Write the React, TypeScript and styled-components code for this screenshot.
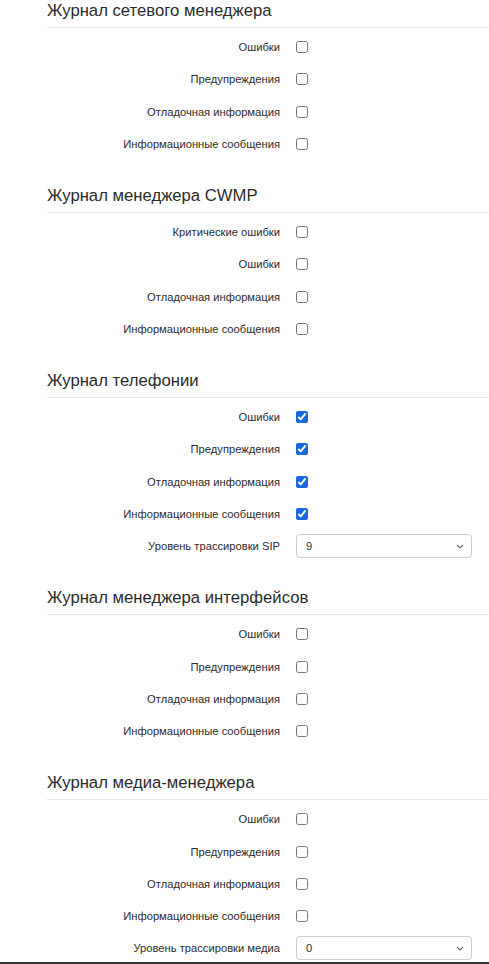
import React from "react";
import styled, { createGlobalStyle } from "styled-components";

type Field =
  | { kind: "check"; label: string; checked?: boolean }
  | { kind: "select"; label: string; value: string; options: string[] };

type Section = { title: string; fields: Field[] };

const levels = ["0", "1", "2", "3", "4", "5", "6", "7", "8", "9"];

const basic = (checked = false): Field[] => [
  { kind: "check", label: "Ошибки", checked },
  { kind: "check", label: "Предупреждения", checked },
  { kind: "check", label: "Отладочная информация", checked },
  { kind: "check", label: "Информационные сообщения", checked },
];

const sections: Section[] = [
  { title: "Журнал сетевого менеджера", fields: basic() },
  {
    title: "Журнал менеджера CWMP",
    fields: [
      { kind: "check", label: "Критические ошибки" },
      { kind: "check", label: "Ошибки" },
      { kind: "check", label: "Отладочная информация" },
      { kind: "check", label: "Информационные сообщения" },
    ],
  },
  {
    title: "Журнал телефонии",
    fields: [
      ...basic(true),
      { kind: "select", label: "Уровень трассировки SIP", value: "9", options: levels },
    ],
  },
  { title: "Журнал менеджера интерфейсов", fields: basic() },
  {
    title: "Журнал медиа-менеджера",
    fields: [
      ...basic(),
      { kind: "select", label: "Уровень трассировки медиа", value: "0", options: levels },
    ],
  },
];

const App = () => {
  return (
    <>
      <GlobalStyle />
      <Page>
        <Content>
          {sections.map((s) => (
            <Block key={s.title}>
              <Legend>{s.title}</Legend>
              <Rows>
                {s.fields.map((f) => (
                  <Row key={f.label}>
                    <Label>{f.label}</Label>
                    {f.kind === "check" ? (
                      <Check type="checkbox" defaultChecked={f.checked} />
                    ) : (
                      <Select defaultValue={f.value}>
                        {f.options.map((o) => (
                          <option key={o} value={o}>
                            {o}
                          </option>
                        ))}
                      </Select>
                    )}
                  </Row>
                ))}
              </Rows>
            </Block>
          ))}
        </Content>
        <Footer />
      </Page>
    </>
  );
};

export default App;

const GlobalStyle = createGlobalStyle`
  html, body {
    margin: 0;
    padding: 0;
    background: #fff;
  }
  body {
    font-family: "Liberation Sans", Arial, sans-serif;
    color: #333;
  }
`;

const Page = styled.div`
  height: 100vh;
  display: flex;
  flex-direction: column;
  overflow: hidden;
`;

const Content = styled.div`
  flex: 1;
  min-height: 0;
  overflow: hidden;
  padding-left: 47px;
`;

const Footer = styled.div`
  height: 2px;
  background: #333;
  flex-shrink: 0;
`;

const Block = styled.div`
  & + & {
    margin-top: 25px;
  }
`;

const Legend = styled.div`
  font-family: "Liberation Sans", Arial, sans-serif;
  font-size: 16.7px;
  line-height: 21px;
  padding-bottom: 6px;
  border-bottom: 1px solid #e5e5e5;
  color: #2b2b2b;
`;

const Rows = styled.div`
  padding-top: 3px;
`;

const Row = styled.div`
  display: grid;
  grid-template-columns: 233px 1fr;
  column-gap: 16px;
  align-items: center;
  height: 32.25px;
`;

const Label = styled.label`
  text-align: right;
  font-size: 11.2px;
  color: #2b2b2b;
  white-space: nowrap;
`;

const Check = styled.input`
  width: 12px;
  height: 12px;
  margin: 0;
  accent-color: #1a66e0;
`;

const Select = styled.select`
  appearance: none;
  width: 176px;
  height: 24px;
  padding: 0 20px 0 9px;
  font-family: "Liberation Sans", Arial, sans-serif;
  font-size: 11.2px;
  color: #333;
  background: #fff
    url("data:image/svg+xml;utf8,<svg xmlns='http://www.w3.org/2000/svg' width='8' height='5' viewBox='0 0 8 5'><path d='M1 1l3 3 3-3' fill='none' stroke='%23666' stroke-width='1.1'/></svg>")
    no-repeat right 7px center;
  border: 1px solid #ccc;
  border-radius: 4px;
  outline: none;
`;
